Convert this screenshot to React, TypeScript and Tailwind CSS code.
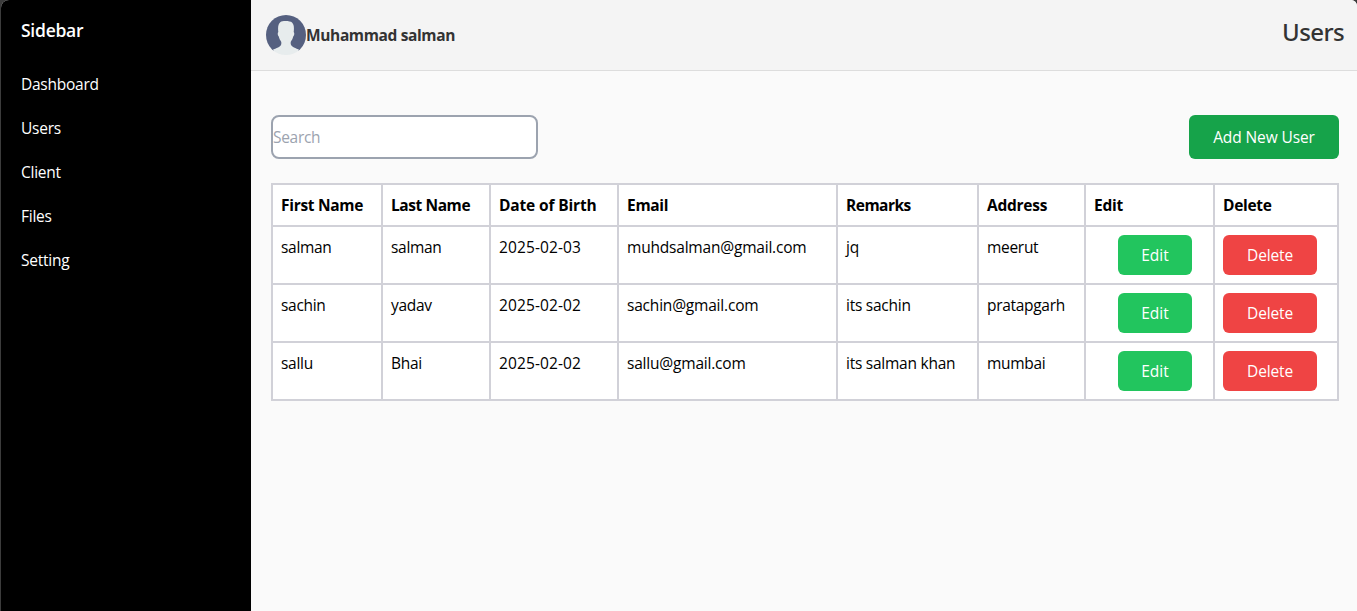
import React from "react";

const nav = ["Dashboard", "Users", "Client", "Files", "Setting"];
const heads = [
  { label: "First Name", tracking: "tracking-[-0.3px]" },
  { label: "Last Name", tracking: "tracking-[-0.42px]" },
  { label: "Date of Birth", tracking: "tracking-[-0.15px]" },
  { label: "Email", tracking: "tracking-[-0.3px]" },
  { label: "Remarks", tracking: "tracking-[-0.5px]" },
  { label: "Address", tracking: "tracking-[-0.25px]" },
  { label: "Edit", tracking: "tracking-[-0.2px]" },
  { label: "Delete", tracking: "tracking-[-0.3px]" },
];
const rows = [
  ["salman", "salman", "2025-02-03", "muhdsalman@gmail.com", "jq", "meerut"],
  ["sachin", "yadav", "2025-02-02", "sachin@gmail.com", "its sachin", "pratapgarh"],
  ["sallu", "Bhai", "2025-02-02", "sallu@gmail.com", "its salman khan", "mumbai"],
];
const cellTracking = [
  "tracking-[-0.3px]",
  "tracking-[-0.3px]",
  "tracking-[0.12px]",
  "tracking-[-0.2px]",
  "tracking-[-0.25px]",
  "tracking-[-0.3px]",
];
const cols = ["w-[110px]", "w-[108px]", "w-[128px]", "w-[219px]", "w-[141px]", "w-[107px]", "w-[129px]", "w-[124px]"];

function Avatar() {
  return (
    <svg className="size-10 shrink-0" viewBox="0 0 40 40">
      <defs>
        <clipPath id="avatar">
          <circle cx="20" cy="20" r="20" />
        </clipPath>
      </defs>
      <g clipPath="url(#avatar)">
        <path d="M0 0H40V36H0Z" fill="#556080" />
        <path
          d="M14.500 7C16.500 5.500 24.500 5.800 26 7.500C28 9.500 28.200 12.500 27.700 17C28.700 18 28.300 20.500 27.200 21.500C26.700 24 25.500 25.500 24.700 27V29C25.300 32 30 33 33.500 35L36 41H4L6.500 35C10 33 15 32 15.300 29V27C14.500 25.500 13.300 24 12.800 21.500C11.700 20.500 11.300 18 12.300 17C11.800 12.500 12 9 14.500 7Z"
          fill="#e7eced"
        />
      </g>
    </svg>
  );
}

export default function App() {
  return (
    <div className="h-[611px] w-full overflow-hidden bg-[#3c3c3c] pl-px font-['Open_Sans','Noto_Sans',sans-serif] text-[15.5px] leading-6 text-black">
      <div className="flex h-full overflow-hidden rounded-tl-lg rounded-tr-md bg-[#fafafa]">
        <aside className="w-[250px] shrink-0 bg-black px-5 pt-4 text-white">
          <h2 className="text-[17.5px] leading-7 font-semibold tracking-[-0.25px]">Sidebar</h2>
          <ul className="mt-7 space-y-5 tracking-[-0.25px]">
            {nav.map((n) => (
              <li key={n}>{n}</li>
            ))}
          </ul>
        </aside>
        <div className="min-w-0 flex-1">
          <header className="flex h-[71px] items-start justify-between border-b border-[#dddddd] bg-[#f4f4f4] pr-[13px] pl-[15px] text-[#333333]">
            <div className="mt-[15px] flex items-center">
              <Avatar />
              <span className="font-bold tracking-[-0.37px]">Muhammad salman</span>
            </div>
            <h1 className="mt-[14px] font-['Noto_Sans',sans-serif] text-[24px] leading-9 font-medium tracking-[-0.6px]">Users</h1>
          </header>
          <main className="pt-[44px] pr-[18px] pl-5">
            <div className="flex justify-between">
              <input
                placeholder="Search"
                className="h-11 w-[267px] rounded-lg border-2 border-[#9ca3af] bg-white tracking-[-0.3px] placeholder:text-[#9ca3af]"
              />
              <button className="h-11 w-[150px] rounded-md bg-[#16a34a] tracking-[-0.1px] text-white">Add New User</button>
            </div>
            <table className="mt-6 w-[1068px] table-fixed border-collapse bg-white">
              <colgroup>
                {cols.map((c, i) => (
                  <col key={i} className={c} />
                ))}
              </colgroup>
              <thead>
                <tr className="h-[42px]">
                  {heads.map((h) => (
                    <th
                      key={h.label}
                      className={`border-2 border-[#d1d1d8] px-2 py-2 text-left font-bold whitespace-nowrap ${h.tracking}`}
                    >
                      {h.label}
                    </th>
                  ))}
                </tr>
              </thead>
              <tbody>
                {rows.map((r, i) => (
                  <tr key={i} className="h-[58px]">
                    {r.map((c, j) => (
                      <td
                        key={j}
                        className={`border-2 border-[#d1d1d8] px-2 py-2 align-top whitespace-nowrap ${cellTracking[j]}`}
                      >
                        {c}
                      </td>
                    ))}
                    <td className="border-2 border-[#d1d1d8] py-2 pl-8 align-top">
                      <button className="block h-10 w-[74px] rounded-md bg-[#22c55e] text-white">Edit</button>
                    </td>
                    <td className="border-2 border-[#d1d1d8] px-2 py-2 align-top">
                      <button className="block h-10 w-[94px] rounded-md bg-[#ef4444] tracking-[-0.15px] text-white">Delete</button>
                    </td>
                  </tr>
                ))}
              </tbody>
            </table>
          </main>
        </div>
      </div>
    </div>
  );
}
